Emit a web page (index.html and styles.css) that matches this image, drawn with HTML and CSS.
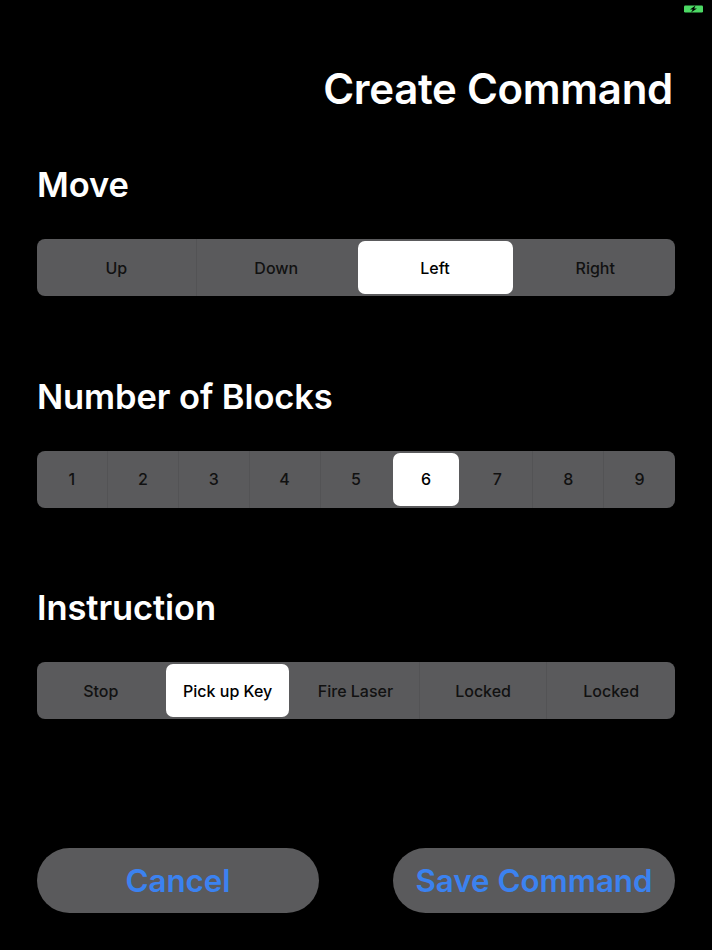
FILE: index.html
```html
<!DOCTYPE html>
<html lang="en">
<head>
    <meta charset="UTF-8">
    <title>Create Command</title>
    <link rel="stylesheet" href="styles.css">
</head>
<body>
    <div class="status-bar">
        <svg class="battery" width="20" height="8" viewBox="0 0 20 8">
            <rect x="0" y="0.5" width="19" height="7" rx="1.2" fill="#4cd964"/>
            <path d="M11.5 0.5 L6 4.4 H8.8 L7 7.5 L13 3.6 H10.2 Z" fill="#000"/>
        </svg>
    </div>

    <h1 class="title">Create Command</h1>

    <section class="group group-move">
        <h2>Move</h2>
        <div class="segmented">
            <div class="segment">Up</div>
            <div class="segment">Down</div>
            <div class="segment selected">Left</div>
            <div class="segment">Right</div>
        </div>
    </section>

    <section class="group">
        <h2>Number of Blocks</h2>
        <div class="segmented">
            <div class="segment">1</div>
            <div class="segment">2</div>
            <div class="segment">3</div>
            <div class="segment">4</div>
            <div class="segment">5</div>
            <div class="segment selected">6</div>
            <div class="segment">7</div>
            <div class="segment">8</div>
            <div class="segment">9</div>
        </div>
    </section>

    <section class="group">
        <h2>Instruction</h2>
        <div class="segmented">
            <div class="segment">Stop</div>
            <div class="segment selected">Pick up Key</div>
            <div class="segment">Fire Laser</div>
            <div class="segment">Locked</div>
            <div class="segment">Locked</div>
        </div>
    </section>

    <div class="actions">
        <button type="button">Cancel</button>
        <button type="button">Save Command</button>
    </div>
</body>
</html>
```

FILE: styles.css
```css
* {
    box-sizing: border-box;
}

body {
    margin: 0;
    height: 950px;
    padding: 0 37px;
    background-color: #000;
    color: #fff;
    font-family: Inter, "Liberation Sans", sans-serif;
    overflow: hidden;
}

.status-bar {
    display: flex;
    justify-content: flex-end;
    height: 14px;
    padding-top: 5px;
    margin-right: -29px;
}

.title {
    margin: 47px 2px 0 0;
    height: 56px;
    font-size: 42px;
    line-height: 56px;
    font-weight: 600;
    text-align: right;
    letter-spacing: -0.3px;
}

.group {
    margin-bottom: 78.5px;
}

.group-move {
    margin-top: 46px;
}

.group h2 {
    margin: 0 0 32px 0;
    height: 44px;
    font-size: 34.5px;
    line-height: 44px;
    font-weight: 600;
    letter-spacing: -0.1px;
}

.segmented {
    display: grid;
    grid-auto-flow: column;
    grid-auto-columns: 1fr;
    height: 57px;
    background-color: #5a5a5c;
    border-radius: 8px;
}

.segment {
    display: flex;
    align-items: center;
    justify-content: center;
    color: #111;
    font-size: 16px;
    font-weight: 500;
    border-right: 1px solid #535355;
}

.segment:last-child,
.segment.selected,
.segment:has(+ .selected) {
    border-right: none;
}

.segment.selected {
    margin: 2px 3px 2px 1.5px;
    background-color: #fff;
    color: #000;
    border-radius: 7px;
}

.actions {
    display: flex;
    justify-content: space-between;
    margin-top: 129px;
}

button {
    width: 282px;
    height: 65px;
    border: none;
    border-radius: 33px;
    background-color: #5a5a5c;
    color: #3b82f0;
    font-family: inherit;
    font-size: 31.3px;
    font-weight: 600;
}
```
